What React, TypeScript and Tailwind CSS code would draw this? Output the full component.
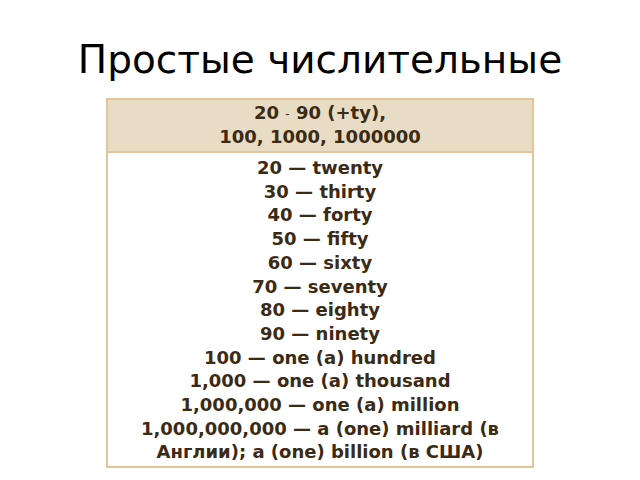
import React from 'react';

const rows = [
  '20 — twenty',
  '30 — thirty',
  '40 — forty',
  '50 — fifty',
  '60 — sixty',
  '70 — seventy',
  '80 — eighty',
  '90 — ninety',
  '100 — one (a) hundred',
  '1,000 — one (a) thousand',
  '1,000,000 — one (a) million',
  '1,000,000,000 — a (one) milliard (в Англии); a (one) billion (в США)',
];

export default function App() {
  return (
    <div className="w-[640px] h-[480px] bg-white flex flex-col items-center" style={{ fontFamily: '"DejaVu Sans", sans-serif' }}>
      <h1 className="mt-[36px] h-[62px] text-[39px] leading-[48px] text-black">Простые числительные</h1>
      <div className="w-[428px] border-2 border-[#e3c49c] text-[#3b2a14] font-bold text-[18px] leading-[23.7px] text-center">
        <div className="bg-[#e9dcc5] border-b-2 border-[#e3c49c] pt-[1px] pb-[2px]">
          <div className="h-[24px]">20 <span className="text-[12px] leading-none font-normal align-middle">-</span> 90 (+ty),</div>
          <div className="h-[24px]">100, 1000, 1000000</div>
        </div>
        <div className="px-[10px] pt-[3px] pb-[2px]">
          {rows.map((r) => (
            <div key={r}>{r}</div>
          ))}
        </div>
      </div>
    </div>
  );
}
